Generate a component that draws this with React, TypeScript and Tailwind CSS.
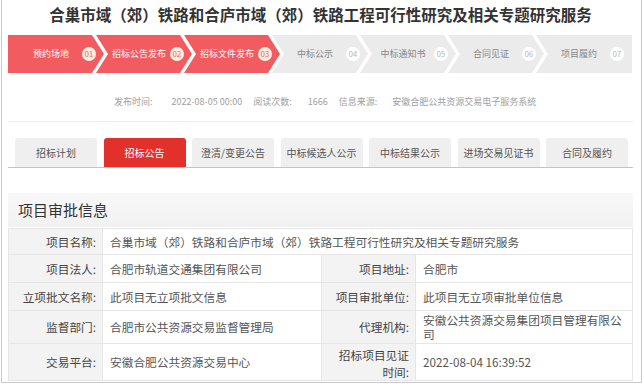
const steps = [
  { label: '预约场地', num: '01', done: true },
  { label: '招标公告发布', num: '02', done: true },
  { label: '招标文件发布', num: '03', done: true },
  { label: '中标公示', num: '04', done: false },
  { label: '中标通知书', num: '05', done: false },
  { label: '合同见证', num: '06', done: false },
  { label: '项目履约', num: '07', done: false },
];

const tabs = ['招标计划', '招标公告', '澄清/变更公告', '中标候选人公示', '中标结果公示', '进场交易见证书', '合同及履约'];

const clipFirst = '[clip-path:polygon(0_0,calc(100%_-_12px)_0,100%_50%,calc(100%_-_12px)_100%,0_100%)]';
const clipMid = '[clip-path:polygon(0_0,calc(100%_-_12px)_0,100%_50%,calc(100%_-_12px)_100%,0_100%,12px_50%)]';
const clipLast = '[clip-path:polygon(0_0,100%_0,100%_100%,0_100%,12px_50%)]';

function Label({ children, className = '' }: { children: React.ReactNode; className?: string }) {
  return (
    <div className={`flex items-center justify-end bg-[#f3f3f3] border-r border-b border-[#e6e6e6] pr-[6px] text-right text-[#444] ${className}`}>
      {children}
    </div>
  );
}

function Value({ children, className = '' }: { children: React.ReactNode; className?: string }) {
  return (
    <div className={`flex items-center bg-white border-r border-b border-[#e6e6e6] pl-[7px] text-[#555] ${className}`}>
      {children}
    </div>
  );
}

export default function App() {
  return (
    <div className="w-[642px] h-[387px] bg-white font-['Noto_Sans_CJK_SC','Microsoft_YaHei',sans-serif]">
      <div className="ml-[1px] w-[641px] border-x border-b border-[#c9c9c9] pl-[6px] pr-[8px] pb-[1px]">
        <h1 className="pt-[4px] text-center text-[15.5px] leading-[20px] font-bold text-[#333]">
          合巢市域（郊）铁路和合庐市域（郊）铁路工程可行性研究及相关专题研究服务
        </h1>

        {/* steps */}
        <div className="mt-[11px] flex">
          {steps.map((s, i) => (
            <div
              key={s.num}
              className={`flex h-[38px] w-[96px] shrink-0 items-center pl-[12px] pr-[8px] ${i > 0 ? '-ml-[8px]' : ''} ${
                i === 0 ? clipFirst : i === steps.length - 1 ? clipLast : clipMid
              } ${s.done ? 'bg-[#f25b60] text-white' : 'bg-[#ebebeb] text-[#888]'}`}
            >
              <span className="flex-1 text-center text-[9px] leading-[12px] whitespace-nowrap">{s.label}</span>
              <span
                className={`flex h-[14px] w-[14px] items-center justify-center rounded-full text-[7.5px] leading-none ${
                  s.done ? 'bg-[#fdeedd] text-[#f25b60]' : 'bg-white text-[#b5b5b5]'
                }`}
              >
                {s.num}
              </span>
            </div>
          ))}
        </div>

        {/* meta */}
        <div className="flex border-b border-[#efefef] pt-[23px] pb-[13px] pl-[106px] text-[9px] leading-[12px] text-[#a0a0a0] whitespace-nowrap">
          <span>发布时间:</span>
          <span className="ml-[19px]">2022-08-05 00:00</span>
          <span className="ml-[11px]">阅读次数:</span>
          <span className="ml-[16px]">1666</span>
          <span className="ml-[11px]">信息来源:</span>
          <span className="ml-[15px]">安徽合肥公共资源交易电子服务系统</span>
        </div>

        {/* tabs */}
        <div className="mt-[16px] flex gap-[6.5px] border-b border-[#f2b1ae] pl-[7px]">
          {tabs.map((t, i) => (
            <div
              key={t}
              className={`flex h-[29px] w-[82px] items-center justify-center rounded-t-[3px] text-[10px] ${
                i === 1 ? 'bg-[#e2312b] text-white' : 'bg-[#efefef] text-[#555]'
              }`}
            >
              {t}
            </div>
          ))}
        </div>

        {/* section */}
        <div className="mt-[25px] flex h-[34px] items-center bg-gradient-to-b from-[#f8f8f8] to-[#f1f1f1] pl-[10px] text-[15px] text-[#333]">
          项目审批信息
        </div>

        <div className="mt-[1px] border-t border-l border-[#e6e6e6] text-[11.7px] leading-[14px]">
          <div className="flex h-[26px]">
            <Label className="w-[94px]">项目名称:</Label>
            <Value className="flex-1">合巢市域（郊）铁路和合庐市域（郊）铁路工程可行性研究及相关专题研究服务</Value>
          </div>
          <div className="flex h-[28px]">
            <Label className="w-[94px]">项目法人:</Label>
            <Value className="w-[219px]">合肥市轨道交通集团有限公司</Value>
            <Label className="w-[94px]">项目地址:</Label>
            <Value className="flex-1">合肥市</Value>
          </div>
          <div className="flex h-[28px]">
            <Label className="w-[94px]">立项批文名称:</Label>
            <Value className="w-[219px]">此项目无立项批文信息</Value>
            <Label className="w-[94px]">项目审批单位:</Label>
            <Value className="flex-1">此项目无立项审批单位信息</Value>
          </div>
          <div className="flex h-[33px]">
            <Label className="w-[94px]">监督部门:</Label>
            <Value className="w-[219px]">合肥市公共资源交易监督管理局</Value>
            <Label className="w-[94px]">代理机构:</Label>
            <Value className="flex-1 pr-[10px]">安徽公共资源交易集团项目管理有限公司</Value>
          </div>
          <div className="flex h-[37px]">
            <Label className="w-[94px]">交易平台:</Label>
            <Value className="w-[219px]">安徽合肥公共资源交易中心</Value>
            <Label className="w-[94px] flex-col items-end justify-center leading-[17px]">
              <span>招标项目见证</span>
              <span>时间:</span>
            </Label>
            <Value className="flex-1">2022-08-04 16:39:52</Value>
          </div>
        </div>
      </div>
    </div>
  );
}
